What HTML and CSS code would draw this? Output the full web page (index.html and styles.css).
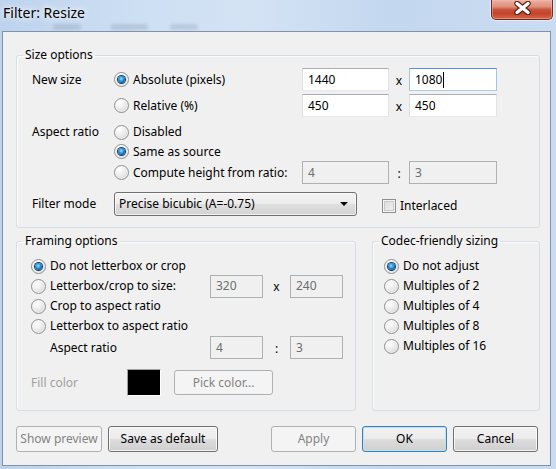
FILE: index.html
```html
<!DOCTYPE html>
<html>
<head>
<meta charset="utf-8">
<link rel="stylesheet" href="styles.css">
</head>
<body>
<div class="window">
  <div class="titlebar">
    <span class="ghost g1"></span>
    <span class="ghost g2"></span>
    <span class="ghost g3"></span>
    <div class="title">Filter: Resize</div>
    <div class="close">
      <svg width="19" height="14" viewBox="0 0 19 14">
        <path d="M4 2.5 L15 11.5 M15 2.5 L4 11.5" stroke="#5b1c12" stroke-width="5.5" stroke-linecap="round" fill="none"/>
        <path d="M4 2.5 L15 11.5 M15 2.5 L4 11.5" stroke="#ffffff" stroke-width="3.4" stroke-linecap="round" fill="none"/>
      </svg>
    </div>
  </div>
  <div class="client">
    <fieldset class="group size">
      <legend>Size options</legend>
      <div class="body">
        <div class="row h23">
          <span class="lbl w82">New size</span>
          <span class="opt w188"><span class="radio on"></span>Absolute (pixels)</span>
          <span class="input w87">1440</span>
          <span class="sep w20">x</span>
          <span class="input w88 focus">1080<span class="caret"></span></span>
        </div>
        <div class="row h23 mt3">
          <span class="lbl w82"></span>
          <span class="opt w188"><span class="radio"></span>Relative (%)</span>
          <span class="input w87">450</span>
          <span class="sep w20">x</span>
          <span class="input w88">450</span>
        </div>
        <div class="row h20 mt5">
          <span class="lbl w82">Aspect ratio</span>
          <span class="opt w188"><span class="radio"></span>Disabled</span>
        </div>
        <div class="row h19">
          <span class="lbl w82"></span>
          <span class="opt w188"><span class="radio on"></span>Same as source</span>
        </div>
        <div class="row h23">
          <span class="lbl w82"></span>
          <span class="opt w188"><span class="radio"></span>Compute height from ratio:</span>
          <span class="input w87 dis">4</span>
          <span class="sep w20">:</span>
          <span class="input w88 dis">3</span>
        </div>
        <div class="row h24 mt8">
          <span class="lbl w82">Filter mode</span>
          <span class="select">Precise bicubic (A=-0.75)<span class="arrow"></span></span>
          <span class="check"></span>
          <span class="low">Interlaced</span>
        </div>
      </div>
    </fieldset>

    <div class="lower">
      <fieldset class="group framing">
        <legend>Framing options</legend>
        <div class="body">
          <div class="row h20"><span class="radio on"></span>Do not letterbox or crop</div>
          <div class="row h20">
            <span class="opt w179"><span class="radio"></span>Letterbox/crop to size:</span>
            <span class="input w53 dis">320</span>
            <span class="sep w27">x</span>
            <span class="input w53 dis">240</span>
          </div>
          <div class="row h20"><span class="radio"></span>Crop to aspect ratio</div>
          <div class="row h20"><span class="radio"></span>Letterbox to aspect ratio</div>
          <div class="row h23">
            <span class="lbl w179 indent">Aspect ratio</span>
            <span class="input w53 dis">4</span>
            <span class="sep w27">:</span>
            <span class="input w53 dis">3</span>
          </div>
          <div class="row h27 mt10">
            <span class="lbl w96 grey">Fill color</span>
            <span class="swatch"></span>
            <span class="btn dis pick">Pick color...</span>
          </div>
        </div>
      </fieldset>
      <fieldset class="group codec">
        <legend>Codec-friendly sizing</legend>
        <div class="body">
          <div class="row h20"><span class="radio on"></span>Do not adjust</div>
          <div class="row h20"><span class="radio"></span>Multiples of 2</div>
          <div class="row h20"><span class="radio"></span>Multiples of 4</div>
          <div class="row h20"><span class="radio"></span>Multiples of 8</div>
          <div class="row h20"><span class="radio"></span>Multiples of 16</div>
        </div>
      </fieldset>
    </div>

    <div class="buttons">
      <div class="btngroup">
        <span class="btn dis w86">Show preview</span>
        <span class="btn w110">Save as default</span>
      </div>
      <div class="btngroup">
        <span class="btn dis w85">Apply</span>
        <span class="btn def w85">OK</span>
        <span class="btn w85">Cancel</span>
      </div>
    </div>
  </div>
</div>
</body>
</html>
```
FILE: styles.css
```css
* { box-sizing: border-box; }
html, body { margin: 0; padding: 0; }
body {
  width: 556px;
  height: 469px;
  overflow: hidden;
  font-family: "Segoe UI", "Noto Sans", sans-serif;
  font-size: 12px;
  line-height: 16px;
  color: #000;
  background: linear-gradient(to right, #bdd3ed 0%, #cddff3 25%, #d4e3f4 45%, #c3d7ef 70%, #cadcf1 100%);
}
.window {
  height: 469px;
  display: flex;
  flex-direction: column;
}

/* title bar */
.titlebar {
  position: relative;
  height: 31px;
  display: flex;
  align-items: flex-start;
  flex: none;
  overflow: hidden;
}
.ghost {
  position: absolute;
  top: 24px;
  height: 6px;
  border-radius: 3px;
  background: rgba(90, 100, 120, 0.18);
  filter: blur(1.5px);
}
.g1 { left: 53px; width: 28px; }
.g2 { left: 111px; width: 37px; }
.g3 { left: 170px; width: 28px; }
.title {
  position: relative;
  font-size: 14px;
  line-height: 18px;
  padding: 4px 0 0 3px;
  color: #000;
  text-shadow: 0 0 6px #fff, 0 0 10px rgba(255, 255, 255, 0.9);
}
.close {
  margin-left: auto;
  margin-right: 3px;
  width: 62px;
  height: 20px;
  border: 1px solid #6f2b1f;
  border-top: none;
  border-radius: 0 0 5px 5px;
  background: linear-gradient(#eab1a3 0%, #df907c 35%, #c9543c 50%, #c2432b 70%, #d7654a 100%);
  box-shadow: 0 0 0 1px rgba(255, 255, 255, 0.45), inset 0 0 0 1px rgba(255, 190, 175, 0.45);
  display: flex;
  justify-content: center;
  align-items: flex-start;
  padding-top: 1px;
}

/* client area */
.client {
  height: 435px;
  margin: 0 5px 0 2px;
  border: 1px solid #8292a8;
  background: #f0f0f0;
  padding: 15px 10px 0 13px;
}

.group {
  margin: 0;
  padding: 5px 0 11px 6px;
  border: 1px solid #d5dfe5;
  border-radius: 3px;
  min-width: 0;
  box-shadow: inset 1px 1px 0 #fbfbfb;
}
legend {
  padding: 0 2px;
  line-height: 16px;
}
.size .body { padding-left: 9px; }
.lower {
  display: flex;
  gap: 16px;
  margin-top: 5px;
}
.framing { width: 340px; padding: 7px 0 14px 6px; }
.framing .body { padding-left: 8px; }
.codec { width: 168px; padding: 7px 0 14px 6px; }
.codec .body { padding-left: 5px; }

.row { display: flex; align-items: center; }
.h19 { height: 19px; }
.h20 { height: 20px; }
.h23 { height: 23px; }
.h24 { height: 24px; }
.h27 { height: 27px; }
.mt3 { margin-top: 3px; }
.mt5 { margin-top: 5px; }
.mt8 { margin-top: 8px; }
.mt10 { margin-top: 10px; }

.lbl { flex: none; }
.w20 { width: 20px; }
.w27 { width: 27px; }
.w53 { width: 53px; }
.w82 { width: 82px; }
.w85 { width: 85px; }
.w86 { width: 86px; }
.w87 { width: 87px; }
.w88 { width: 88px; }
.w96 { width: 96px; }
.w110 { width: 110px; }
.w179 { width: 179px; }
.w188 { width: 188px; }
.indent { padding-left: 19px; }
.grey { color: #a0a0a0; }
.low { margin-top: 4px; }

.opt { display: flex; align-items: center; flex: none; }

.radio {
  position: relative;
  flex: none;
  width: 15px;
  height: 15px;
  margin-right: 4px;
  border-radius: 50%;
  border: 1px solid #8d8f91;
  background: radial-gradient(circle at 35% 30%, #ffffff 0%, #ececec 45%, #cdcdcd 100%);
  box-shadow: inset 0 0 0 1px rgba(255, 255, 255, 0.6);
}
.radio.on::after {
  content: "";
  position: absolute;
  left: 3px;
  top: 3px;
  width: 7px;
  height: 7px;
  border-radius: 50%;
  background: radial-gradient(circle at 45% 40%, #9fe2ff 0%, #36a0e6 35%, #0e5ea8 70%, #0a3a6e 100%);
  box-shadow: 0 0 0 1px #17395e;
}

.input {
  flex: none;
  height: 23px;
  display: flex;
  align-items: center;
  padding-left: 5px;
  background: #fff;
  border: 1px solid;
  border-color: #abadb3 #e2e3ea #e3e9ef #dbdfe6;
}
.input.focus { border-color: #5b93c6 #a4c4e3 #b2cfe9 #a4c4e3; }
.input.dis {
  background: #f0f0f0;
  border-color: #adb2b5;
  color: #6d6d6d;
}
.caret {
  display: inline-block;
  width: 1px;
  height: 16px;
  background: #000;
  margin-left: 1px;
}
.sep { flex: none; text-align: center; padding-top: 2px; }

.select {
  flex: none;
  width: 243px;
  height: 24px;
  display: flex;
  align-items: center;
  padding: 0 8px 0 4px;
  border: 1px solid #707070;
  border-radius: 3px;
  background: linear-gradient(#f4f4f4 0%, #ececec 50%, #dfdfdf 51%, #d3d3d3 100%);
  box-shadow: inset 0 0 0 1px rgba(255, 255, 255, 0.7);
}
.arrow {
  margin-left: auto;
  width: 0;
  height: 0;
  border-left: 4px solid transparent;
  border-right: 4px solid transparent;
  border-top: 4px solid #000;
}
.check {
  flex: none;
  width: 14px;
  height: 14px;
  margin: 4px 4px 0 25px;
  border: 1px solid #8e8f8f;
  background: linear-gradient(135deg, #d8d8d8 0%, #f4f4f4 100%);
  box-shadow: inset 0 0 0 1px #f4f4f4, inset 0 0 0 2px #c9c9c9;
}

.swatch {
  flex: none;
  width: 34px;
  height: 27px;
  background: #000;
  border: 1px solid;
  border-color: #a0a0a0 #ffffff #ffffff #a0a0a0;
}

.btn {
  flex: none;
  height: 26px;
  display: flex;
  align-items: center;
  justify-content: center;
  border: 1px solid #707070;
  border-radius: 3px;
  background: linear-gradient(#f2f2f2 0%, #ebebeb 50%, #dddddd 51%, #cfcfcf 100%);
  box-shadow: inset 0 0 0 1px rgba(252, 252, 252, 0.8);
}
.btn.dis {
  border-color: #adb2b5;
  background: #f4f4f4;
  box-shadow: none;
  color: #838383;
}
.btn.def {
  border-color: #3c7fb1;
  box-shadow: inset 0 0 0 1px #b9e1f7;
}
.pick {
  width: 99px;
  height: 25px;
  margin-left: 13px;
}

.buttons {
  display: flex;
  justify-content: space-between;
  margin: 15px 2px 0 0;
}
.btngroup { display: flex; gap: 6px; }
```
